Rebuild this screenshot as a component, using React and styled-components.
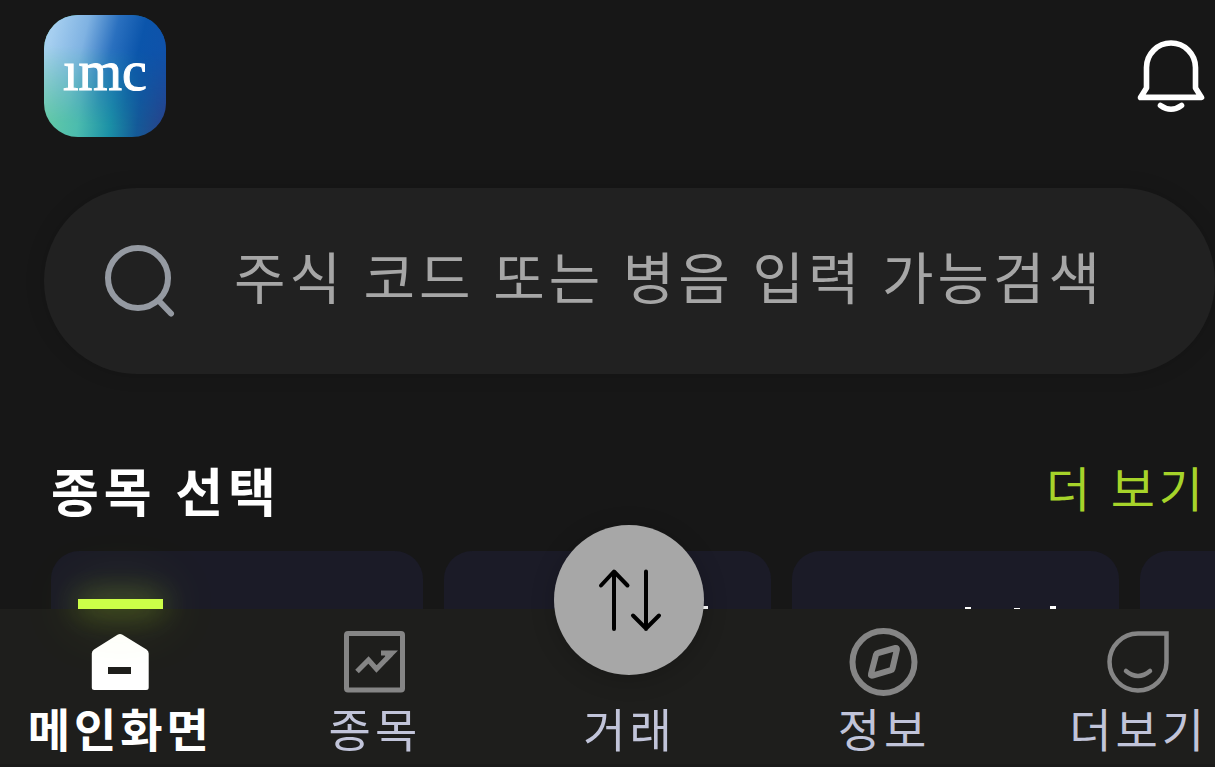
import React from 'react';
import styled, { createGlobalStyle } from 'styled-components';

const GlobalStyle = createGlobalStyle`
  *, *::before, *::after { box-sizing: border-box; }
  html, body { margin: 0; background: #171717; }
  body {
    font-family: "Noto Sans", "Noto Sans CJK KR", sans-serif;
    color: #fff;
    overflow: hidden;
  }
  button, input { font: inherit; letter-spacing: inherit; color: inherit; }
  button { background: none; border: 0; padding: 0; cursor: pointer; }
  svg { display: block; }
`;

const Page = styled.div`
  min-height: 100vh;
  overflow: hidden;
`;

const Header = styled.header`
  display: flex;
  justify-content: space-between;
  align-items: center;
  padding: 15px 8px 0 44px;
`;

const Logo = styled.a`
  position: relative;
  isolation: isolate;
  overflow: hidden;
  display: flex;
  align-items: center;
  justify-content: center;
  width: 122px;
  height: 122px;
  padding-bottom: 10px;
  border-radius: 34px;
  background: linear-gradient(97deg, #66cba6 8%, #4cbcae 34%, #1b90a6 58%, #145a98 78%, #2b3f88 100%);
  color: #fff;
  font: 56px/64px "Liberation Serif", serif;
  -webkit-text-stroke: 1px #fff;
  text-decoration: none;

  &::before {
    content: "";
    position: absolute;
    inset: 0;
    z-index: -1;
    background: linear-gradient(104deg, #a6cff0 8%, #7fb2e2 30%, #2a70bf 50%, #0b55ab 68%, #134fa8 100%);
    mask-image: linear-gradient(183deg, #000 28%, transparent 88%);
  }
`;

const IconButton = styled.button`
  display: block;
`;

const SearchBox = styled.label`
  display: flex;
  align-items: center;
  gap: 56px;
  height: 186px;
  margin: 51px 0 0 44px;
  padding: 0 60px;
  border-radius: 93px;
  background: #212121;
  box-shadow: 0 0 20px rgba(0, 0, 0, 0.14);
`;

const SearchInput = styled.input`
  flex: 1;
  min-width: 0;
  height: 96px;
  padding: 0 0 8px;
  border: 0;
  outline: 0;
  background: transparent;
  font-size: 56px;
  letter-spacing: 4px;
  &::placeholder { color: #a6a6a6; opacity: 1; }
`;

const SectionHead = styled.div`
  display: flex;
  justify-content: space-between;
  align-items: center;
  margin-top: 79px;
  padding: 0 8px 0 51px;
`;

const SectionTitle = styled.h2`
  margin: 0;
  font-size: 52px;
  line-height: 78px;
  font-weight: 700;
  letter-spacing: 5px;
`;

const MoreLink = styled.a`
  color: #a6d42a;
  font-size: 48px;
  line-height: 72px;
  padding-bottom: 6px;
  letter-spacing: 4px;
  text-decoration: none;
`;

const Cards = styled.div`
  display: flex;
  gap: 21px;
  margin-top: 20px;
  padding-left: 51px;
`;

const Card = styled.article`
  flex: 0 0 ${(p) => (p.$wide ? 372 : 327)}px;
  height: 240px;
  border-radius: 28px;
  background: #1b1b27;
  display: flex;
  justify-content: flex-end;
  align-items: flex-start;
  gap: ${(p) => p.$gap || 0}px;
  padding: 55px 63px 0;
`;

const Stem = styled.i`
  width: 6px;
  height: 40px;
  margin-top: ${(p) => p.$drop || 0}px;
  margin-right: ${(p) => p.$space || 0}px;
  background: #fff;
`;

const TabBar = styled.nav`
  position: fixed;
  left: -7px;
  right: -51px;
  bottom: 0;
  height: 158px;
  display: grid;
  grid-template-columns: repeat(5, 1fr);
  background: #1e1e1c;
  border-bottom: 3px solid #1b1b1a;
`;

const Tab = styled.button`
  position: relative;
  display: flex;
  flex-direction: column;
  align-items: center;
  justify-content: flex-start;
  padding-top: 16px;
  color: ${(p) => (p.$active ? '#fff' : '#c1c4d9')};
  font-size: 46px;
  line-height: 64px;
  letter-spacing: 4px;
  font-weight: ${(p) => (p.$active ? 700 : 400)};
`;

const TabIcon = styled.span`
  display: block;
  height: 72px;
  color: #858585;
`;

const ActiveMark = styled.span`
  position: absolute;
  top: -10px;
  left: 50%;
  width: 85px;
  height: 10px;
  margin-left: -42px;
  background: #ccff48;
  box-shadow: 0 0 60px rgba(190, 245, 50, 0.45), 0 0 30px rgba(190, 245, 50, 0.5);
`;

const TradeDisc = styled.span`
  position: absolute;
  top: -84px;
  left: 50%;
  width: 150px;
  height: 150px;
  margin-left: -75px;
  border-radius: 50%;
  background: #a7a7a7;
  box-shadow: 0 4px 24px rgba(0, 0, 0, 0.2);
  display: flex;
  align-items: center;
  justify-content: center;
`;

const BellIcon = () => (
  <svg width="72" height="80" viewBox="0 0 72 80" fill="none" stroke="#fff" strokeWidth="5.6" strokeLinejoin="round" strokeLinecap="round">
    <path d="M11.500 31.500a24.500 24.500 0 0 1 49 0V52l6 9.400H5.500l6-9.400Z" />
    <path d="M25.500 69.500q10.500 7.500 21 0" />
  </svg>
);

const SearchIcon = () => (
  <svg width="74" height="76" viewBox="0 0 74 76" fill="none" stroke="#959aa2" strokeWidth="6" strokeLinecap="round">
    <circle cx="34" cy="35" r="30" />
    <path d="M55 58l12 12.500" />
  </svg>
);

const HomeIcon = () => (
  <svg width="72" height="72" viewBox="0 0 72 72">
    <path d="M33.500 9.700q2.500-1.600 5 0L62.500 24.500q2.200 1.500 2.200 4V62.500q0 2.500-2.500 2.500H10.300q-2.500 0-2.500-2.500V28.500q0-2.500 2.200-4Z" fill="#fff" />
    <rect x="24" y="42" width="23" height="7" fill="#1e1e1c" />
  </svg>
);

const ChartIcon = () => (
  <svg width="72" height="72" viewBox="0 0 72 72" fill="none" stroke="currentColor" strokeWidth="5">
    <rect x="7.500" y="8.500" width="56" height="56.500" rx="1.500" />
    <path d="M18 46.500L29.500 35l8 9L52 29" />
    <path d="M42 25.500h17L48 36.500l-2-6h-4Z" fill="currentColor" stroke="none" />
  </svg>
);

const SwapIcon = () => (
  <svg width="72" height="72" viewBox="0 0 72 72" fill="none" stroke="#000" strokeWidth="4" strokeLinecap="round" strokeLinejoin="round">
    <path d="M21 65V8M8 21.500L21 7.500 34.500 21.500" />
    <path d="M53 7.500V65M40 51.500l13 13L66 51.500" />
  </svg>
);

const CompassIcon = () => (
  <svg width="72" height="72" viewBox="0 0 72 72" fill="none" stroke="currentColor" strokeWidth="6" strokeLinejoin="round">
    <circle cx="35.500" cy="37" r="31" />
    <path d="M30 28l17.500-5q1.700-.3 1.400 1.500L44.500 43.500q-.3 1.300-1.500 1.600L24.500 50.600q-2 .4-1.500-1.500L28 29.800q.5-1.500 2-1.800Z" />
  </svg>
);

const SmileIcon = () => (
  <svg width="72" height="72" viewBox="0 0 72 72" fill="none" stroke="currentColor" strokeWidth="4.500">
    <path d="M35 8.500h28.500V37.500A28.500 28.500 0 1 1 35 8.500Z" />
    <path d="M23 46q12 10 24 0" strokeLinecap="round" />
  </svg>
);

const tabs = [
  { label: '메인화면', Icon: HomeIcon, active: true },
  { label: '종목', Icon: ChartIcon },
  { label: '거래', Icon: SwapIcon, disc: true },
  { label: '정보', Icon: CompassIcon },
  { label: '더보기', Icon: SmileIcon },
];

export default function App() {
  return (
    <Page>
      <GlobalStyle />
      <Header>
        <Logo href="#">ımc</Logo>
        <IconButton type="button" aria-label="알림"><BellIcon /></IconButton>
      </Header>
      <SearchBox>
        <SearchIcon />
        <SearchInput type="text" aria-label="검색" placeholder="주식 코드 또는 병음 입력 가능검색" />
      </SearchBox>
      <SectionHead>
        <SectionTitle>종목 선택</SectionTitle>
        <MoreLink href="#">더 보기</MoreLink>
      </SectionHead>
      <Cards>
        <Card $wide />
        <Card><Stem /></Card>
        <Card $gap={30}>
          <Stem $drop={1} $space={13} />
          <Stem $drop={2} />
          <Stem />
        </Card>
        <Card />
      </Cards>
      <TabBar>
        {tabs.map(({ label, Icon, active, disc }) => (
          <Tab key={label} type="button" $active={active}>
            {active && <ActiveMark />}
            <TabIcon>{disc ? <TradeDisc><Icon /></TradeDisc> : <Icon />}</TabIcon>
            {label}
          </Tab>
        ))}
      </TabBar>
    </Page>
  );
}
